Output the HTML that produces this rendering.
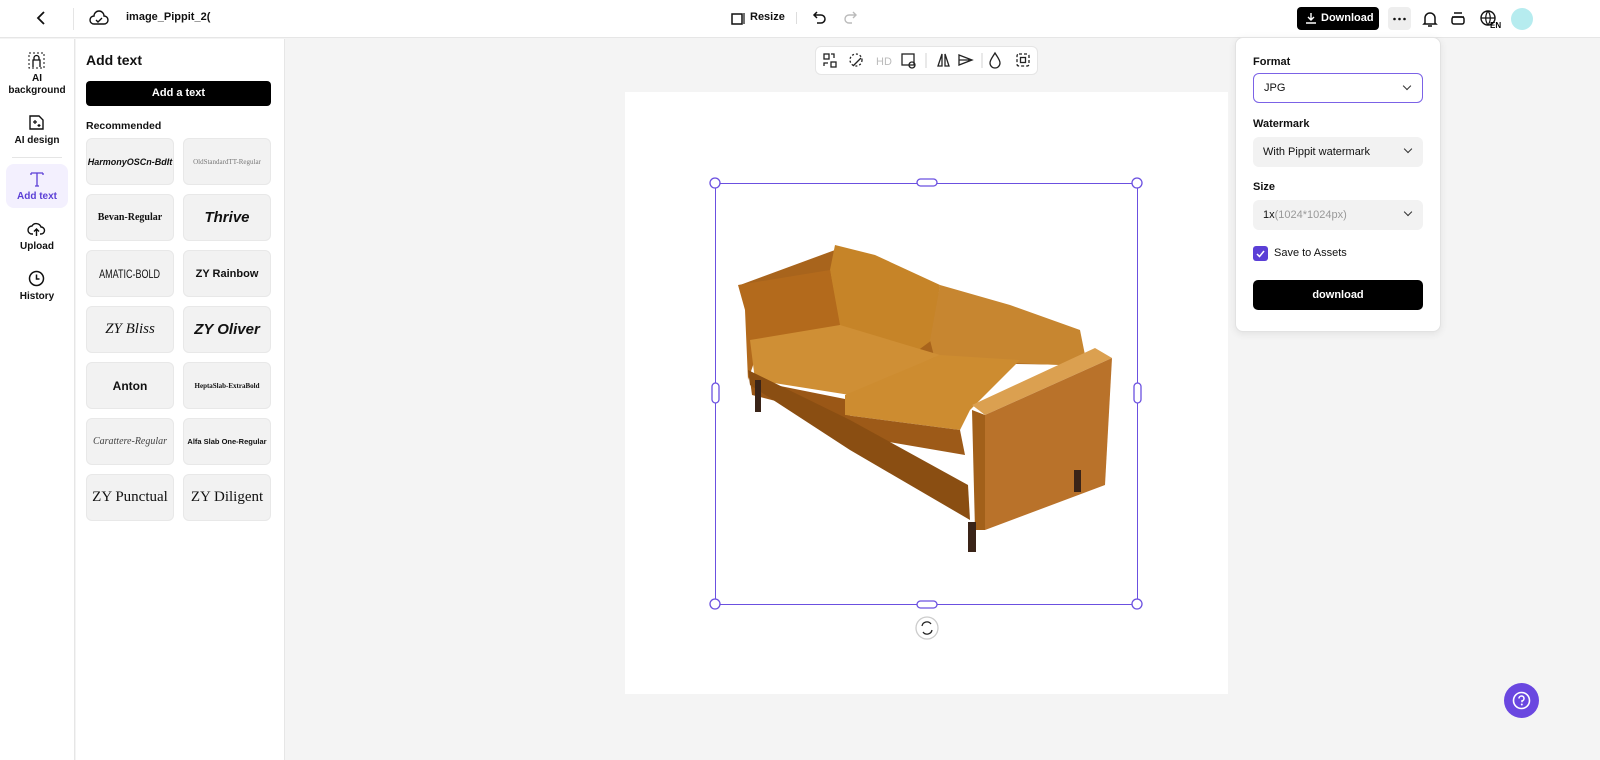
<!DOCTYPE html>
<html><head><meta charset="utf-8"><style>
*{box-sizing:border-box;margin:0;padding:0}
body{width:1600px;height:760px;overflow:hidden;font-family:"Liberation Sans",sans-serif;background:#f4f4f4;position:relative;color:#111}
.abs{position:absolute}
.top{left:0;top:0;width:1600px;height:38px;background:#fff;border-bottom:1px solid #e6e6e6}
.rail{left:0;top:39px;width:75px;height:721px;background:#fff;border-right:1px solid #e6e6e6}
.panel{left:76px;top:39px;width:209px;height:721px;background:#fff;border-right:1px solid #e6e6e6}
.ri{position:absolute;left:6px;width:62px;text-align:center;font-size:10px;font-weight:bold;line-height:12px}
.card{position:absolute;width:88px;height:47px;background:#f2f2f2;border:1px solid #e8e8e8;border-radius:6px;display:flex;align-items:center;justify-content:center;font-size:11px;white-space:nowrap;overflow:hidden}
.lbl{position:absolute;left:17px;font-size:11px;font-weight:bold}
.sel{position:absolute;left:17px;width:170px;height:30px;border-radius:6px;background:#f2f2f2;font-size:11px;padding-left:10px;line-height:30px}
.chev{position:absolute;right:12px;top:9px;width:6px;height:6px;border-right:1.3px solid #333;border-bottom:1.3px solid #333;transform:rotate(45deg)}
</style></head><body>
<div class="abs top"></div>
<svg class="abs" style="left:34px;top:10px" width="14" height="16"><path d="M10 2L4 8l6 6" stroke="#111" stroke-width="1.8" fill="none"/></svg>
<div class="abs" style="left:73px;top:8px;width:1px;height:22px;background:#e5e5e5"></div>
<svg class="abs" style="left:89px;top:9px" width="20" height="18"><path d="M5 15a4 4 0 0 1 0-8 5 5 0 0 1 10 0 4 4 0 0 1 0 8z" stroke="#111" stroke-width="1.4" fill="none"/><path d="M7 11l2 2 4-4" stroke="#111" stroke-width="1.4" fill="none"/></svg>
<div class="abs" style="left:126px;top:11px;font-size:11px;font-weight:bold">image_Pippit_2(</div>
<svg class="abs" style="left:730px;top:10px" width="16" height="16"><path d="M2 4h10v10H2z" stroke="#111" stroke-width="1.5" fill="none"/><path d="M14 3v11" stroke="#111" stroke-width="1.2"/></svg>
<div class="abs" style="left:750px;top:11px;font-size:11px;font-weight:bold">Resize</div>
<div class="abs" style="left:796px;top:12px;width:1px;height:12px;background:#ddd"></div>
<svg class="abs" style="left:812px;top:9px" width="16" height="16"><path d="M5 3L2 6l3 3M2 6h7a4 4 0 0 1 0 8H5" stroke="#111" stroke-width="1.5" fill="none"/></svg>
<svg class="abs" style="left:842px;top:9px" width="16" height="16"><path d="M11 3l3 3-3 3M14 6H7a4 4 0 0 0 0 8h3" stroke="#bbb" stroke-width="1.4" fill="none"/></svg>
<div class="abs" style="left:1297px;top:7px;width:82px;height:23px;background:#000;border-radius:4px;color:#fff;font-size:11px;font-weight:bold;line-height:23px;padding-left:24px">Download</div>
<svg class="abs" style="left:1305px;top:12px" width="12" height="12"><path d="M6 1v7M3 5l3 3 3-3M1 11h10" stroke="#fff" stroke-width="1.4" fill="none"/></svg>
<div class="abs" style="left:1388px;top:7px;width:23px;height:23px;background:#eee;border-radius:4px"></div>
<svg class="abs" style="left:1388px;top:7px" width="23" height="23"><circle cx="6.5" cy="12" r="1.3" fill="#111"/><circle cx="11.5" cy="12" r="1.3" fill="#111"/><circle cx="16.5" cy="12" r="1.3" fill="#111"/></svg>
<svg class="abs" style="left:1421px;top:9px" width="18" height="20"><path d="M4 14V9a5 5 0 0 1 10 0v5l1 1H3zM7 17h4" stroke="#111" stroke-width="1.5" fill="none"/></svg>
<svg class="abs" style="left:1450px;top:10px" width="16" height="16"><rect x="2" y="7" width="12" height="7" rx="2" stroke="#111" stroke-width="1.5" fill="none"/><path d="M4 3h8M2 7h12" stroke="#111" stroke-width="1.5"/></svg>
<svg class="abs" style="left:1479px;top:9px" width="24" height="20"><circle cx="9" cy="9" r="7" stroke="#111" stroke-width="1.4" fill="none"/><path d="M2 9h14M9 2c-3 4-3 10 0 14M9 2c3 4 3 10 0 14" stroke="#111" stroke-width="1.2" fill="none"/><text x="11" y="19" font-size="8" font-weight="bold" font-family="Liberation Sans">EN</text></svg>
<div class="abs" style="left:1511px;top:8px;width:22px;height:22px;border-radius:50%;background:#b6ecef"></div>

<div class="abs rail"></div>
<svg class="abs" style="left:28px;top:52px" width="17" height="17"><rect x="1" y="1" width="15" height="15" stroke="#111" stroke-dasharray="2 2" fill="none"/><path d="M5 15V8h7v7M6 8V6a2.5 2.5 0 0 1 5 0v2" stroke="#111" stroke-width="1.3" fill="none"/></svg>
<div class="ri" style="top:73px">AI<br>background</div>
<svg class="abs" style="left:28px;top:114px" width="17" height="17"><path d="M2 2h9l4 4v9H2z" stroke="#111" stroke-width="1.4" fill="none"/><path d="M7 6v4M5 8h4M11 10v3M9.5 11.5h3" stroke="#111" stroke-width="1.2"/></svg>
<div class="ri" style="top:135px">AI design</div>
<div class="abs" style="left:12px;top:157px;width:50px;height:1px;background:#e5e5e5"></div>
<div class="abs" style="left:6px;top:164px;width:62px;height:44px;background:#f3f0fe;border-radius:8px"></div>
<svg class="abs" style="left:29px;top:171px" width="16" height="16"><path d="M2 2h12M8 2v13M6 15h4M2 2v2M14 2v2" stroke="#5b3fd6" stroke-width="1.3" fill="none"/></svg>
<div class="ri" style="top:191px;color:#5b3fd6">Add text</div>
<svg class="abs" style="left:27px;top:220px" width="19" height="17"><path d="M6 14H5a4 4 0 0 1 0-8 5 5 0 0 1 9 1 3.5 3.5 0 0 1 0 7h-1M9.5 16V9M7 11.5l2.5-2.5 2.5 2.5" stroke="#111" stroke-width="1.4" fill="none"/></svg>
<div class="ri" style="top:241px">Upload</div>
<svg class="abs" style="left:28px;top:270px" width="17" height="17"><circle cx="8.5" cy="8.5" r="7" stroke="#111" stroke-width="1.5" fill="none"/><path d="M8.5 4.5v4.5h3" stroke="#111" stroke-width="1.5" fill="none"/></svg>
<div class="ri" style="top:291px">History</div>

<div class="abs panel"></div>
<div class="abs" style="left:86px;top:52px;font-size:14px;font-weight:bold">Add text</div>
<div class="abs" style="left:86px;top:81px;width:185px;height:25px;background:#000;border-radius:4px;color:#fff;font-size:11px;font-weight:bold;text-align:center;line-height:25px">Add a text</div>
<div class="abs" style="left:86px;top:120px;font-size:10.5px;font-weight:bold">Recommended</div>
<div class="card" style="left:86px;top:138px;font-style:italic;font-weight:bold;font-size:9px">HarmonyOSCn-BdIt</div>
<div class="card" style="left:183px;top:138px;font-family:'Liberation Serif';font-size:7px;color:#777">OldStandardTT-Regular</div>
<div class="card" style="left:86px;top:194px;font-family:'Liberation Serif';font-weight:bold;font-size:10px">Bevan-Regular</div>
<div class="card" style="left:183px;top:194px;font-size:15px;font-weight:bold;font-style:italic">Thrive</div>
<div class="card" style="left:86px;top:250px"><span style="font-size:12px;display:inline-block;transform:scaleX(.75)">AMATIC-BOLD</span></div>
<div class="card" style="left:183px;top:250px;font-size:11px;font-weight:bold">ZY Rainbow</div>
<div class="card" style="left:86px;top:306px;font-family:'Liberation Serif';font-style:italic;font-size:15px">ZY Bliss</div>
<div class="card" style="left:183px;top:306px;font-weight:bold;font-style:italic;font-size:15px">ZY Oliver</div>
<div class="card" style="left:86px;top:362px;font-weight:bold;font-size:12px">Anton</div>
<div class="card" style="left:183px;top:362px;font-family:'Liberation Serif';font-weight:bold;font-size:7px">HeptaSlab-ExtraBold</div>
<div class="card" style="left:86px;top:418px;font-family:'Liberation Serif';font-style:italic;font-size:10px;color:#444">Carattere-Regular</div>
<div class="card" style="left:183px;top:418px;font-weight:bold;font-size:7.5px">Alfa Slab One-Regular</div>
<div class="card" style="left:86px;top:474px;font-family:'Liberation Serif';font-size:15px">ZY Punctual</div>
<div class="card" style="left:183px;top:474px;font-family:'Liberation Serif';font-size:15px">ZY Diligent</div>

<div class="abs" style="left:815px;top:46px;width:223px;height:29px;background:#fff;border:1px solid #e5e5e5;border-radius:6px"></div>
<svg class="abs" style="left:815px;top:46px" width="223" height="29" fill="none" stroke="#222" stroke-width="1.3">
<rect x="9" y="8" width="5" height="5"/><rect x="16" y="16" width="5" height="5"/><path d="M16 8h3v4M13 17h-4v3"/>
<circle cx="41" cy="14" r="6" stroke-dasharray="2 2"/><path d="M38 20l8-8"/>
<text x="61" y="19" font-size="11" fill="#bbb" stroke="none" font-family="Liberation Sans">HD</text>
<rect x="87" y="8" width="12" height="11"/><circle cx="97" cy="19" r="3"/>
<path d="M111 7v15" stroke="#ddd"/>
<path d="M123 20l4-12v12zM130 20V8l4 12z"/>
<path d="M144 9l13 5-13 5v-10zM144 14h13"/>
<path d="M167 7v15" stroke="#ddd"/>
<path d="M180 7c-3 5-5 7-5 10a5 5 0 0 0 10 0c0-3-2-5-5-10z"/>
<rect x="202" y="8" width="12" height="12" rx="2" stroke-dasharray="3 2"/><rect x="205.5" y="11.5" width="5" height="5"/>
</svg>

<div class="abs" style="left:625px;top:92px;width:603px;height:602px;background:#fff"></div>
<svg class="abs" style="left:700px;top:230px" width="430" height="330">
<polygon points="40,55 135,20 385,125 380,135 60,130" fill="#a8641c"/>
<polygon points="135,15 175,25 240,55 232,110 205,130 140,100 130,40" fill="#c68428"/>
<polygon points="240,55 310,75 380,100 385,125 360,135 235,130 230,110" fill="#c78630"/>
<polygon points="38,55 130,40 140,95 60,115 48,150 45,80" fill="#b36a1c"/>
<polygon points="50,110 140,95 240,125 150,165 55,150" fill="#cf8f35"/>
<polygon points="50,150 150,170 150,190 52,165" fill="#9a5716"/>
<polygon points="145,165 240,125 320,130 270,180 260,200 145,185" fill="#cd8c30"/>
<polygon points="145,185 260,200 265,225 148,205" fill="#9d5a18"/>
<polygon points="48,140 150,190 268,255 270,290 150,220 50,155" fill="#8a4e12"/>
<polygon points="272,175 395,118 412,128 285,185" fill="#dba050"/>
<polygon points="272,180 285,185 285,300 275,300" fill="#a2601a"/>
<polygon points="285,185 412,128 405,255 285,300" fill="#b9722a"/>
<rect x="55" y="150" width="6" height="32" fill="#3a2418"/>
<rect x="268" y="292" width="8" height="30" fill="#3a2418"/>
<rect x="374" y="240" width="7" height="22" fill="#3a2418"/>
</svg>
<div class="abs" style="left:715px;top:183px;width:423px;height:422px;border:1.5px solid #6b50e0"></div>
<svg class="abs" style="left:700px;top:170px" width="460" height="480" fill="#fff" stroke="#6b50e0" stroke-width="1.3">
<circle cx="15" cy="13" r="5"/><circle cx="437" cy="13" r="5"/><circle cx="15" cy="434" r="5"/><circle cx="437" cy="434" r="5"/>
<rect x="217" y="9" width="20" height="7" rx="3.5"/><rect x="217" y="431" width="20" height="7" rx="3.5"/>
<rect x="12" y="213" width="7" height="20" rx="3.5"/><rect x="434" y="213" width="7" height="20" rx="3.5"/>
<circle cx="227" cy="458" r="11" stroke="#ccc"/><path d="M222 456a5 5 0 0 1 9-2M232 460a5 5 0 0 1-9 2" stroke="#222" fill="none"/>
</svg>

<div class="abs" style="left:1235px;top:37px;width:206px;height:295px;background:#fff;border:1px solid #e2e2e2;border-radius:8px;box-shadow:0 2px 8px rgba(0,0,0,.08)">
<div class="lbl" style="top:18px">Format</div>
<div class="sel" style="top:35px;background:#fff;border:1px solid #7b62e6;line-height:28px">JPG<div class="chev"></div></div>
<div class="lbl" style="top:80px">Watermark</div>
<div class="sel" style="top:99px">With Pippit watermark<div class="chev"></div></div>
<div class="lbl" style="top:143px">Size</div>
<div class="sel" style="top:162px">1x<span style="color:#999">(1024*1024px)</span><div class="chev"></div></div>
<div class="abs" style="left:17px;top:208px;width:15px;height:15px;background:#5b3fd6;border-radius:3px"></div>
<svg class="abs" style="left:17px;top:208px" width="15" height="15"><path d="M4 8l2.5 2.5L11 5" stroke="#fff" stroke-width="1.5" fill="none"/></svg>
<div class="abs" style="left:38px;top:209px;font-size:11px">Save to Assets</div>
<div class="abs" style="left:17px;top:242px;width:170px;height:30px;background:#000;border-radius:5px;color:#fff;font-size:11px;font-weight:bold;text-align:center;line-height:30px">download</div>
</div>

<div class="abs" style="left:1504px;top:683px;width:35px;height:35px;border-radius:50%;background:#6a47e0"></div>
<svg class="abs" style="left:1504px;top:683px" width="35" height="35"><circle cx="17.5" cy="17.5" r="8" stroke="#fff" stroke-width="1.6" fill="none"/><path d="M15 15.5a2.5 2.5 0 1 1 3 2.4v1.3" stroke="#fff" stroke-width="1.5" fill="none"/><circle cx="17.8" cy="21.5" r="1" fill="#fff"/></svg>
</body></html>
